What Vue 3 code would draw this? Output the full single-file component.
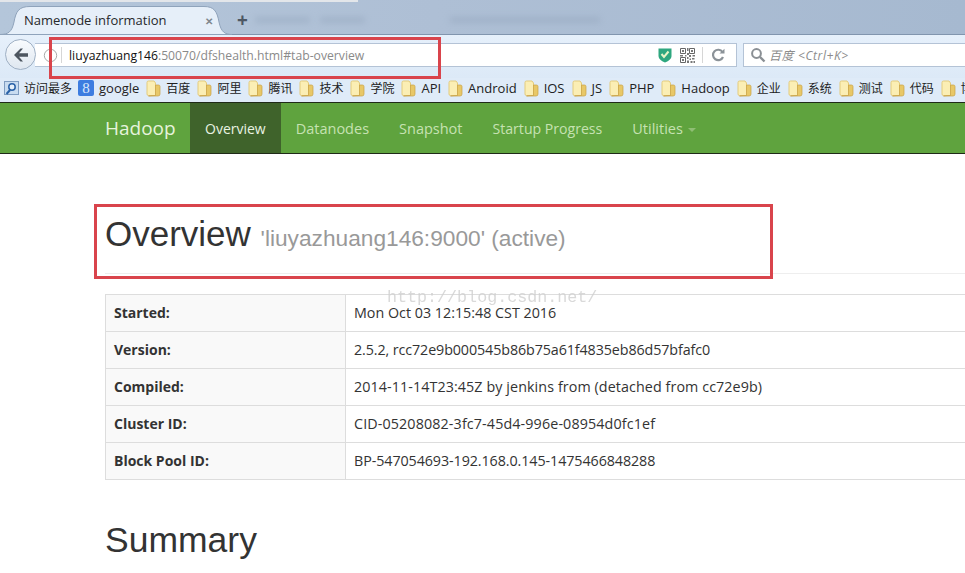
<script setup>
const bookmarks = [
  { t: '百度', cjk: true }, { t: '阿里', cjk: true }, { t: '腾讯', cjk: true }, { t: '技术', cjk: true },
  { t: '学院', cjk: true }, { t: 'API' }, { t: 'Android' }, { t: 'IOS' }, { t: 'JS' }, { t: 'PHP' },
  { t: 'Hadoop' }, { t: '企业', cjk: true }, { t: '系统', cjk: true }, { t: '测试', cjk: true },
  { t: '代码', cjk: true }, { t: '博', cjk: true }
]
const navItems = [
  { t: 'Datanodes' },
  { t: 'Snapshot' },
  { t: 'Startup Progress', tight: true }
]
const blurs = [55, 45, 150]
const rows = [
  { k: 'Started:', v: 'Mon Oct 03 12:15:48 CST 2016', ls: 0 },
  { k: 'Version:', v: '2.5.2, rcc72e9b000545b86b75a61f4835eb86d57bfafc0', ls: -0.1 },
  { k: 'Compiled:', v: '2014-11-14T23:45Z by jenkins from (detached from cc72e9b)', ls: 0.09 },
  { k: 'Cluster ID:', v: 'CID-05208082-3fc7-45d4-996e-08954d0fc1ef', ls: 0.125 },
  { k: 'Block Pool ID:', v: 'BP-547054693-192.168.0.145-1475466848288', ls: -0.08 }
]
</script>

<template>
  <div class="page">
    <div class="tabstrip">
      <div class="top-glow"></div>
      <div class="tab">
        <svg class="tab-shape" width="232" height="35" viewBox="0 0 232 35">
          <path d="M0 34.5 C8 34.5 12 32 14 22 C16 11 19 6.5 30 6.5 L204 6.5 C214 6.5 217 11 219 22 C221 32 225 34.5 232 34.5 Z" fill="#e6eff9" stroke="#8fa3bb" stroke-width="1" />
        </svg>
        <span class="tab-title">Namenode information</span>
        <span class="tab-close">✕</span>
      </div>
      <span class="tab-new">+</span>
      <div class="blur-row">
        <span v-for="(w, i) in blurs" :key="i" class="blur-text" :style="{ width: w + 'px' }"></span>
      </div>
    </div>

    <div class="toolbar">
      <div class="back">
        <svg width="18" height="18" viewBox="0 0 18 18">
          <path d="M8.5 2.5 L2 9 L8.5 15.5 L11 15.5 L7 10.8 L16 10.8 L16 7.2 L7 7.2 L11 2.5 Z" fill="#4d5660" />
        </svg>
      </div>
      <div class="urlbar">
        <svg class="info" width="15" height="15" viewBox="0 0 15 15">
          <circle cx="7.5" cy="7.5" r="6.2" fill="none" stroke="#a9a9a9" />
          <path d="M7.5 4 V8.5 M7.5 10 V11" stroke="#d0d0d0" />
        </svg>
        <span class="sep"></span>
        <span class="url"><b>liuyazhuang146</b>:50070/dfshealth.html#tab-overview</span>
        <span class="url-space"></span>
        <svg class="shield" width="14" height="16" viewBox="0 0 14 16">
          <path d="M0.5 1.5 H13.5 V9 C13.5 12 10 14.5 7 15.5 C4 14.5 0.5 12 0.5 9 Z" fill="#2fa77f" />
          <path d="M3.5 7 L6 10 L10.5 4.5" fill="none" stroke="#e8f5c8" stroke-width="2" />
        </svg>
        <svg class="qr" width="15" height="15" viewBox="0 0 15 15">
          <rect width="15" height="15" fill="#fff" />
          <path d="M0.5 0.5 H5.5 V5.5 H0.5 Z M9.5 0.5 H14.5 V5.5 H9.5 Z M0.5 9.5 H5.5 V14.5 H0.5 Z" fill="none" stroke="#666" />
          <path d="M2 2 H4 V4 H2 Z M11 2 H13 V4 H11 Z M2 11 H4 V13 H2 Z M7 0 H8.5 V3 H7 Z M7 5 H9 V7 H7 Z M0 7 H3 V8.5 H0 Z M5 7 H6.5 V8.5 H5 Z M9 7 H11 V9 H9 Z M12.5 7 H15 V8.5 H12.5 Z M7 9 H8.5 V11 H7 Z M9.5 10.5 H11 V12 H9.5 Z M12 10 H14.5 V11.5 H12 Z M7 12.5 H9 V15 H7 Z M10.5 13 H12.5 V15 H10.5 Z M13.5 13 H15 V15 H13.5 Z" fill="#777" />
        </svg>
        <span class="sep sep-right"></span>
        <svg class="reload" width="14" height="14" viewBox="0 0 14 14">
          <path d="M11.5 4 A5.2 5.2 0 1 0 12 9" fill="none" stroke="#8b9298" stroke-width="2.2" />
          <path d="M8.5 5.5 H13.5 V0.8 Z" fill="#8b9298" />
        </svg>
      </div>
      <div class="searchbar">
        <svg width="16" height="16" viewBox="0 0 16 16">
          <circle cx="6.5" cy="6.5" r="4.4" fill="none" stroke="#8a8f94" stroke-width="2" />
          <path d="M10 10 L14.5 14.5" stroke="#8a8f94" stroke-width="2.4" />
        </svg>
        <span class="search-text">百度 &lt;Ctrl+K&gt;</span>
      </div>
    </div>

    <div class="bookmarks">
      <svg class="bm-first" width="16" height="16" viewBox="0 0 16 16">
        <rect x="0.5" y="1.5" width="14" height="13" fill="#c9dcf0" stroke="#7f9cc0" />
        <circle cx="8" cy="7" r="3.2" fill="#e8f1fa" stroke="#2a62a8" stroke-width="1.5" />
        <path d="M6 10 L2.5 14" stroke="#2a62a8" stroke-width="2" />
      </svg>
      <span class="bm-label cjk">访问最多</span>
      <span class="g-icon">8</span>
      <span class="bm-label bm-google">google</span>
      <span v-for="b in bookmarks" :key="b.t" class="bm">
        <svg width="15" height="17" viewBox="0 0 15 17">
          <path d="M1 2.5 Q1 1 2.5 1 H8 L9.5 3 V15.5 H2.5 Q1 15.5 1 14 Z" fill="#fbeeb4" stroke="#e4cb7c" />
          <path d="M9.5 5 H12.5 Q14 5 14 6.5 V14 Q14 16 12 16 H2.5 Q6 15.5 9.5 15.5 Z" fill="#e8c868" stroke="#c8a246" stroke-width="0.7" />
        </svg>
        <span class="bm-label" :class="{ cjk: b.cjk }">{{ b.t }}</span>
      </span>
    </div>

    <nav class="navbar">
      <span class="brand">Hadoop</span>
      <span class="nav-link active">Overview</span>
      <span v-for="n in navItems" :key="n.t" class="nav-link" :class="{ tight: n.tight }">{{ n.t }}</span>
      <span class="nav-link">Utilities<i class="caret"></i></span>
    </nav>

    <main class="content">
      <header class="page-header">
        <h1>Overview <small>'liuyazhuang146:9000' (active)</small></h1>
      </header>
      <div class="table">
        <div v-for="r in rows" :key="r.k" class="row">
          <div class="cell-head">{{ r.k }}</div>
          <div class="cell-value" :style="{ letterSpacing: r.ls + 'px' }">{{ r.v }}</div>
        </div>
      </div>
      <h2>Summary</h2>
    </main>

    <div class="mark mark-url"></div>
    <div class="mark mark-head"></div>
    <div class="watermark">http://blog.csdn.net/</div>
  </div>
</template>

<style>
html, body { margin: 0; overflow: hidden; background: #fff; }
</style>

<style scoped>
.page {
  position: relative;
  width: 965px;
  height: 573px;
  overflow: hidden;
  background: #fff;
  font-family: "Open Sans", "Noto Sans CJK SC", sans-serif;
  color: #333;
}
.tabstrip {
  position: relative;
  height: 35px;
  box-sizing: border-box;
  display: flex;
  align-items: flex-start;
  background: linear-gradient(90deg, #b4c6da 0%, #aebfd5 45%, #a6b9d0 100%);
  border-bottom: 1px solid #8195ae;
}
.top-glow {
  position: absolute;
  left: 0;
  top: -1px;
  width: 358px;
  height: 3px;
  background: #e3e6ea;
  filter: blur(0.7px);
}
.tab {
  position: relative;
  width: 232px;
  height: 35px;
  flex: none;
}
.tab-shape { position: absolute; left: 0; top: 0; }
.tab-title {
  position: absolute;
  left: 24px;
  top: 11px;
  font-size: 13px;
  line-height: 18px;
  color: #26282b;
  white-space: nowrap;
}
.tab-close {
  position: absolute;
  left: 205px;
  top: 14px;
  font-size: 10px;
  line-height: 14px;
  font-weight: 700;
  color: #7f868d;
}
.tab-new {
  margin: 8px 0 0 5px;
  font-size: 19px;
  line-height: 24px;
  font-weight: 700;
  color: #4d5763;
}
.blur-row {
  display: flex;
  gap: 10px;
  margin: 17px 0 0 7px;
}
.blur-text {
  height: 6px;
  background: #93a5bc;
  opacity: 0.5;
  filter: blur(3px);
}
.blur-text:last-child { margin-left: 75px; }
.toolbar {
  height: 43px;
  box-sizing: border-box;
  padding: 8px 0 0 5px;
  display: flex;
  align-items: flex-start;
  background: linear-gradient(180deg, #e6f0fb, #dce9f7);
}
.back {
  width: 31px;
  height: 31px;
  box-sizing: border-box;
  margin-top: -4px;
  margin-right: -1px;
  position: relative;
  z-index: 1;
  flex: none;
  display: flex;
  align-items: center;
  justify-content: center;
  border-radius: 50%;
  border: 1px solid #9fb0c4;
  background: linear-gradient(180deg, #f8fbfe, #dfe7f0);
}
.urlbar {
  width: 702px;
  height: 24px;
  box-sizing: border-box;
  flex: none;
  display: flex;
  align-items: center;
  padding-left: 8px;
  background: #fff;
  border: 1px solid #b4c3d6;
  border-left: 0;
}
.info { flex: none; }
.sep {
  width: 1px;
  height: 16px;
  background: #d6d6d6;
  margin: 0 7px 0 3px;
  flex: none;
}
.url {
  font-size: 12.2px;
  color: #8a8a8a;
  white-space: nowrap;
}
.url b { font-weight: 400; color: #111; }
.url-space { flex: 1; }
.shield { margin-right: 8px; flex: none; }
.qr { flex: none; }
.sep-right { margin: 0 8px 0 7px; }
.reload { margin-right: 11px; flex: none; }
.searchbar {
  margin-left: 6px;
  width: 240px;
  height: 24px;
  box-sizing: border-box;
  flex: none;
  display: flex;
  align-items: center;
  gap: 3px;
  padding-left: 6px;
  background: #fff;
  border: 1px solid #b4c3d6;
}
.search-text {
  font-size: 12px;
  font-style: italic;
  letter-spacing: 0.6px;
  color: #8c8c8c;
  white-space: nowrap;
}
.bookmarks {
  height: 24px;
  box-sizing: border-box;
  padding: 0 0 4px 4px;
  display: flex;
  align-items: center;
  white-space: nowrap;
  background: #dfebf8;
}
.bm-first { flex: none; margin-right: 4px; }
.bm-label { font-size: 13px; color: #222; flex: none; }
.bm-label.cjk { font-size: 12px; }
.g-icon {
  width: 16px;
  height: 16px;
  margin-left: 6px;
  flex: none;
  background: #3d7de0;
  border-radius: 2px;
  color: #dbe8fb;
  font-family: "Liberation Serif", serif;
  font-size: 15px;
  line-height: 16px;
  text-align: center;
}
.bm-google { margin-left: 5px; }
.bm {
  display: flex;
  align-items: center;
  gap: 5px;
  margin-left: 7px;
  flex: none;
}
.navbar {
  height: 52px;
  box-sizing: border-box;
  padding-left: 105px;
  display: flex;
  background: #5fa33e;
  border-top: 1px solid #1f2a18;
  border-bottom: 1px solid #1f2a18;
  white-space: nowrap;
}
.brand {
  width: 85px;
  font-size: 19px;
  line-height: 51px;
  color: #e6f3dc;
}
.nav-link {
  padding: 0 15px;
  font-size: 14.5px;
  line-height: 51px;
  color: #c6e2b2;
}
.nav-link.tight { font-size: 14.1px; }
.nav-link.active {
  font-size: 14px;
  background: #3f632b;
  color: #e9f3e2;
}
.caret {
  display: inline-block;
  margin-left: 5px;
  vertical-align: middle;
  border-top: 4px solid #8fbe74;
  border-left: 4px solid transparent;
  border-right: 4px solid transparent;
}
.content {
  padding-left: 105px;
}
.page-header {
  margin: 0 -105px 0 0;
  height: 120px;
  box-sizing: border-box;
  padding-top: 56px;
  border-bottom: 1px solid #eee;
}
h1 {
  margin: 0;
  font-family: "Liberation Sans", Arial, sans-serif;
  font-weight: 400;
  font-size: 35px;
  line-height: 48px;
  color: #333;
  white-space: nowrap;
}
small {
  font-size: 22.7px;
  color: #999;
}
.table {
  margin-top: 20px;
  width: 900px;
  border-top: 1px solid #ddd;
  border-left: 1px solid #ddd;
}
.row {
  display: flex;
  height: 37px;
  box-sizing: border-box;
  border-bottom: 1px solid #ddd;
  line-height: 36px;
  font-size: 14px;
}
.cell-head {
  width: 240px;
  box-sizing: border-box;
  padding-left: 8px;
  background: #f9f9f9;
  font-weight: 700;
  border-right: 1px solid #ddd;
}
.cell-value {
  flex: 1;
  font-size: 14.3px;
  padding-left: 8px;
  white-space: nowrap;
}
h2 {
  margin: 38px 0 0;
  font-family: "Liberation Sans", Arial, sans-serif;
  font-weight: 400;
  font-size: 35.5px;
  line-height: 44px;
  color: #333;
}
.mark {
  position: absolute;
  box-sizing: border-box;
  border: 3px solid #d9444c;
}
.mark-url { left: 49px; top: 37px; width: 392px; height: 42px; }
.mark-head { left: 94px; top: 204px; width: 679px; height: 75px; }
.watermark {
  position: absolute;
  left: 387px;
  top: 288px;
  font-family: "Liberation Mono", monospace;
  font-size: 16.7px;
  line-height: 20px;
  color: #d0d0d0;
  opacity: 0.8;
}
</style>
